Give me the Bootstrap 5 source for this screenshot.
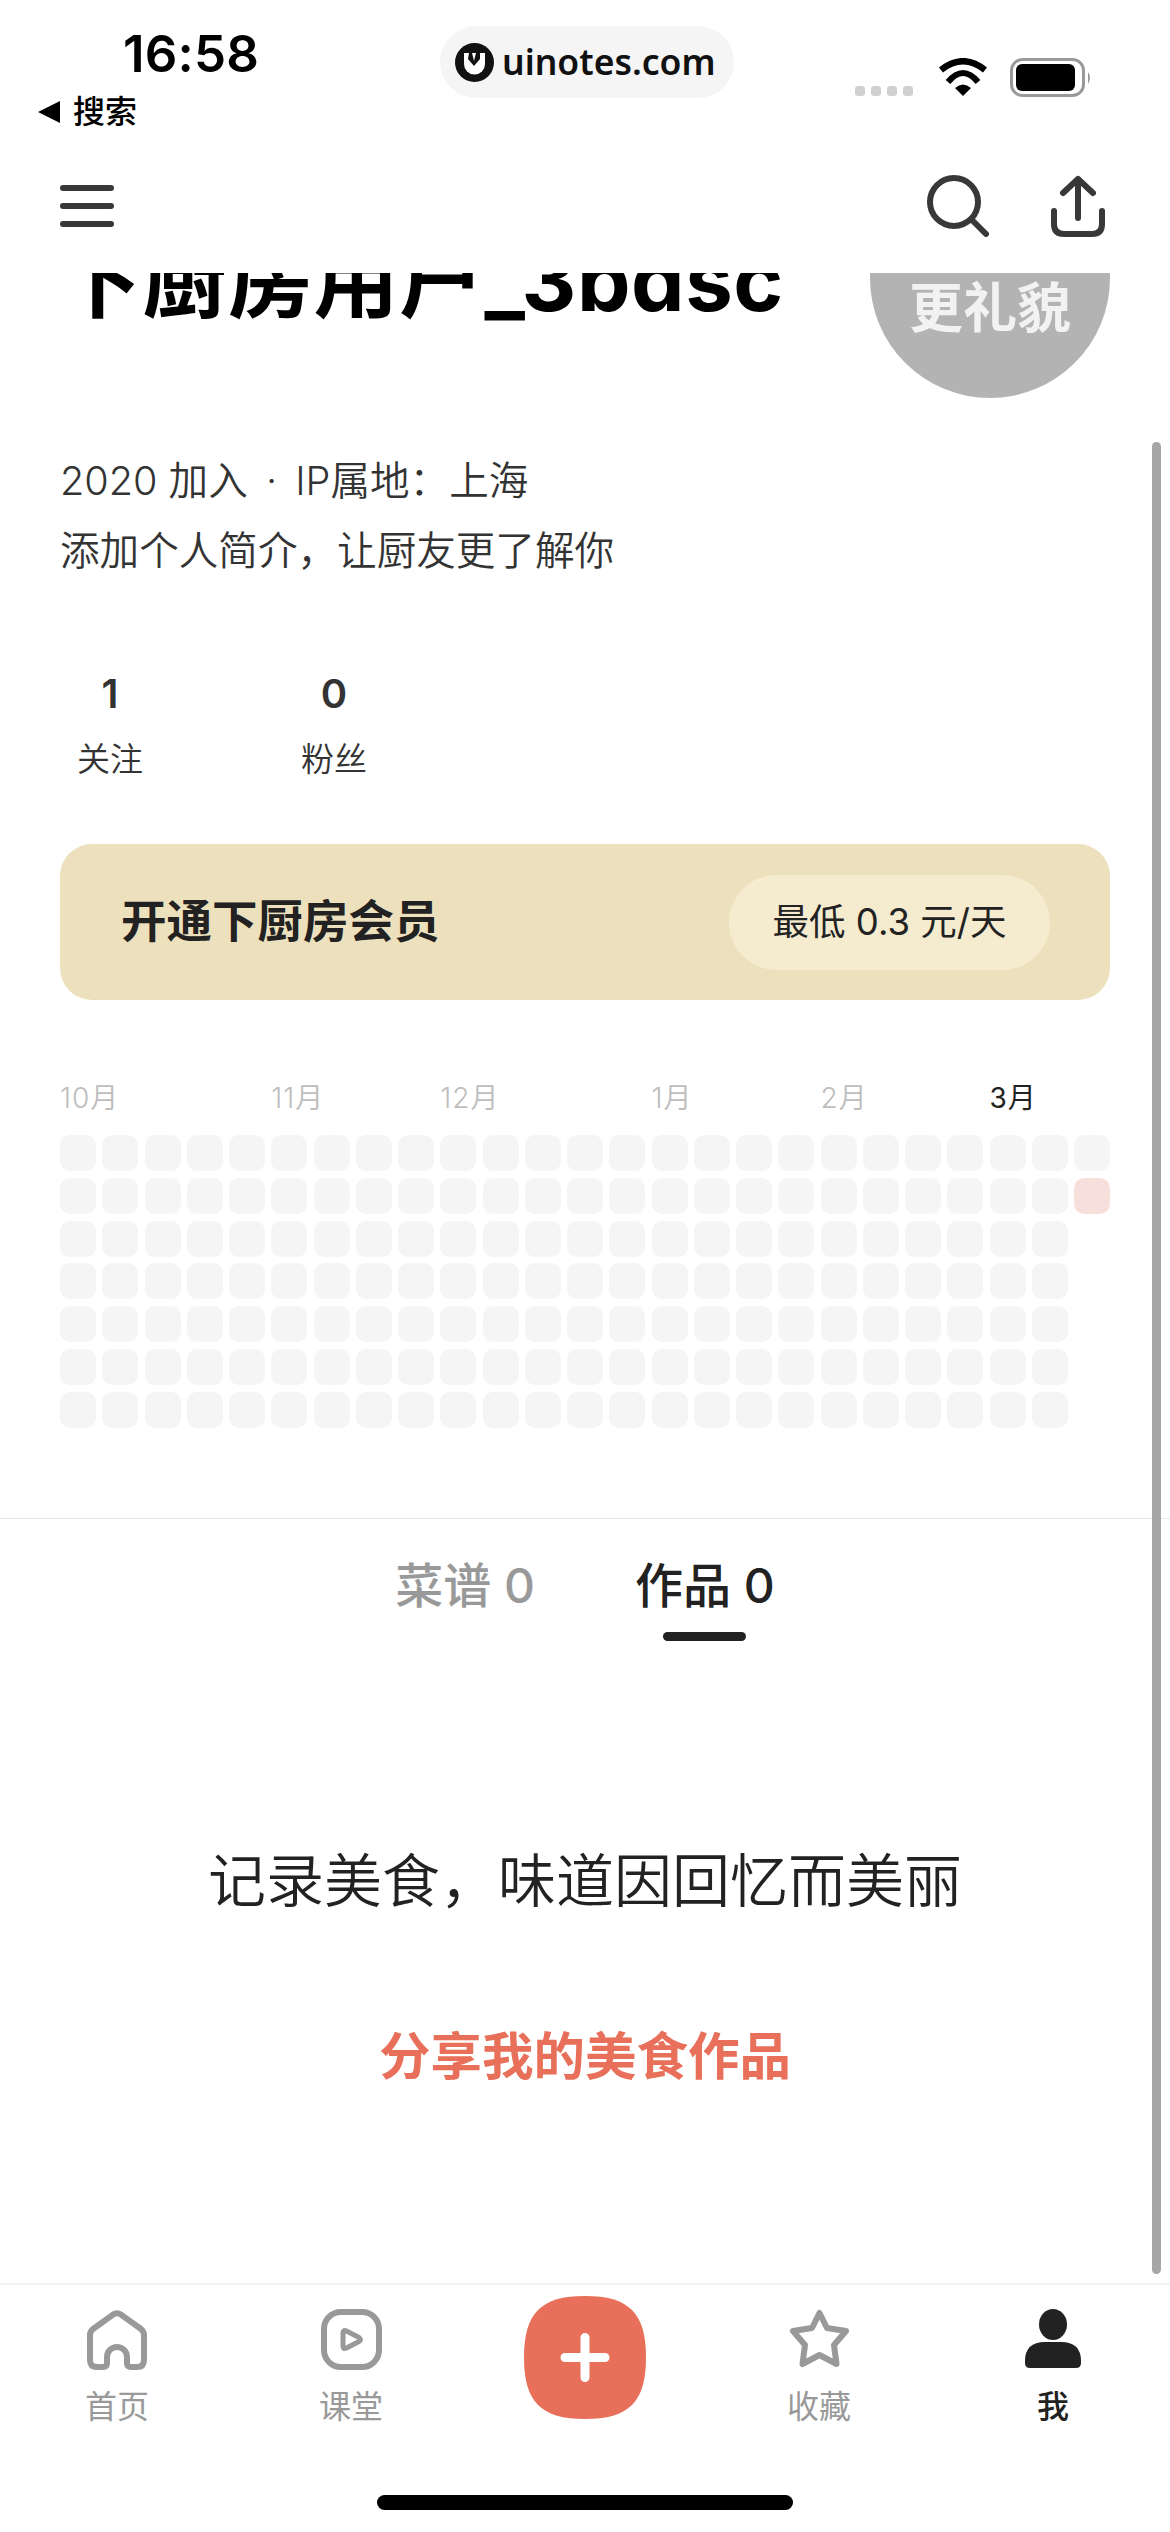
<!DOCTYPE html>
<html lang="zh-CN">
<head>
    <meta charset="UTF-8">
    <meta name="viewport" content="width=device-width, initial-scale=1.0">
    <title>下厨房 - 我</title>
    <link href="https://cdn.jsdelivr.net/npm/bootstrap@5.3.0/dist/css/bootstrap.min.css" rel="stylesheet">
    <style>
        html, body { width: 1170px; height: 2532px; overflow: hidden; }
        body {
            font-family: Inter, "Noto Sans CJK SC", sans-serif;
            color: #333;
            background: #fff;
            position: relative;
        }
        .page-wrap { height: 2532px; }

        /* status bar */
        .status-row { height: 162px; }
        .status-left { width: 440px; padding-left: 38px; }
        .clock { padding: 25px 0 0 85px; font-size: 51px; line-height: 58px; font-weight: 600; color: #000; letter-spacing: .2px; }
        .back-link { margin-top: 7px; font-size: 32px; line-height: 44px; color: #000; font-weight: 500; gap: 13px; }
        .back-tri { width: 0; height: 0; border-top: 11px solid transparent; border-bottom: 11px solid transparent; border-right: 22px solid #000; }
        .site-pill { width: 294px; height: 72px; margin-top: 26px; background: #f5f5f5; padding-left: 15px; gap: 8px; }
        .site-name { font-family: "Noto Sans", sans-serif; font-size: 35.5px; font-weight: 600; color: #111; line-height: 1; }
        .status-right { margin: 58px 0 0 121px; }
        .sig-dots { gap: 6px; margin: 28px 25px 0 0; }
        .sig-dots i { display: block; width: 10px; height: 10px; border-radius: 3px; background: #d0d0d0; }

        /* toolbar */
        .tool-row { height: 111px; padding: 0 65px 0 60px; }
        .burger { width: 54px; gap: 12px; margin-top: -24px; }
        .burger i { display: block; height: 6px; border-radius: 3px; background: #383838; }
        .tool-icons { margin-top: -24px; gap: 62px; }

        /* profile head, scrolled under the toolbar */
        .profile-head { height: 127px; padding: 0 60px 0 57px; }
        .user-name { font-size: 85px; line-height: 100px; font-weight: 700; color: #000; margin-top: -42px; white-space: nowrap; letter-spacing: .5px; }
        .avatar-disc { width: 240px; height: 240px; margin-top: -115px; background: #b3b3b3; color: #f2f2f2; font-size: 54px; font-weight: 700; padding-top: 60px; flex-shrink: 0; }

        .bio-block { padding: 46px 60px 0; font-size: 39.6px; line-height: 70px; color: #333; font-weight: 350; }
        .bio-dot { margin: 0 7px; }
        .stat-row { margin-top: 83px; padding-left: 60px; gap: 124px; }
        .stat-item { width: 100px; }
        .stat-num { font-size: 40px; line-height: 50px; font-weight: 600; color: #333; }
        .stat-label { margin-top: 15px; font-size: 33px; line-height: 50px; color: #333; font-weight: 350; }

        .vip-banner { height: 156px; margin: 60px 60px 0; padding: 0 60px 0 61px; background: #ede0bd; border-radius: 32px; }
        .vip-title { font-size: 45.5px; font-weight: 600; color: #222; }
        .vip-price { width: 321px; height: 95px; background: #f5ebcf; font-size: 36.5px; color: #222; }

        /* activity grid */
        .month-row, .day-grid { display: grid; grid-template-columns: repeat(25, 36px); column-gap: 6.25px; margin-left: 60px; width: 1050px; }
        .month-row { margin-top: 78px; font-size: 28px; line-height: 40px; color: #bdbdbd; font-weight: 350; white-space: nowrap; letter-spacing: 1px; }
        .month-row .month-now { color: #222; font-weight: 400; }
        .day-grid { margin-top: 17px; grid-template-rows: repeat(7, 36px); row-gap: 6.83px; grid-auto-flow: column; }
        .day-cell { background: #f5f5f5; border-radius: 10px; }
        .day-cell.day-on { background: #f7e0dc; }

        /* tabs */
        .tab-row { margin-top: 90px; padding-top: 32px; border-top: 1px solid #e8e8e8; gap: 100px; }
        .tab-item { font-size: 48px; line-height: 70px; font-weight: 500; color: #999; white-space: nowrap; }
        .tab-item.tab-on { color: #222; }
        .tab-mark { width: 83px; height: 9px; margin: 11px auto 0; background: #222; border-radius: 5px; }

        .empty-line { margin-top: 200px; font-size: 58px; line-height: 80px; color: #222; font-weight: 350; }
        .empty-link { margin-top: 100px; font-size: 51.5px; line-height: 70px; color: #e8705a; font-weight: 600; }

        /* bottom tab bar */
        .tabbar { height: 249px; border-top: 2px solid #f2f2f2; }
        .tabbar-cols { height: 210px; }
        .bar-item { width: 234px; padding-top: 24px; color: #999; font-size: 32px; }
        .bar-item svg { display: block; margin: 0 auto; height: 62px; }
        .bar-label { margin-top: 13px; line-height: 46px; font-weight: 400; }
        .bar-item.bar-on { color: #222; }
        .bar-item.bar-on .bar-label { font-weight: 500; }
        .plus-item { padding-top: 11px; }
        .plus-item svg { height: 123px; }
        .home-bar { width: 416px; height: 15px; margin: 0 auto; background: #000; border-radius: 8px; }
        .scroll-thumb { position: absolute; left: 1152px; top: 442px; width: 9px; height: 1832px; background: #a6a6a6; border-radius: 5px; }
    </style>
</head>
<body>
    <div class="page-wrap d-flex flex-column">
        <div class="status-row d-flex">
            <div class="status-left">
                <div class="clock">16:58</div>
                <div class="back-link d-flex align-items-center"><span class="back-tri"></span><span>搜索</span></div>
            </div>
            <div class="site-pill rounded-pill d-flex align-items-center">
                <svg width="39" height="39" viewBox="0 0 39 39">
                    <circle cx="19.5" cy="19.5" r="19.5" fill="#111"/>
                    <path d="M9 10h21v11a10.5 10.5 0 0 1-21 0z" fill="#fff"/>
                    <path d="M14 10h3l2 8 2-8h4v6l-6 7-6-7z" fill="#111"/>
                </svg>
                <span class="site-name">uinotes.com</span>
            </div>
            <div class="status-right d-flex align-items-start">
                <div class="sig-dots d-flex"><i></i><i></i><i></i><i></i></div>
                <svg width="50" height="38" viewBox="0 0 50 38" class="me-4">
                    <path d="M3 12Q25 -5.5 47 12" fill="none" stroke="#000" stroke-width="6.5"/>
                    <path d="M10 24Q25 6 40 24" fill="none" stroke="#000" stroke-width="6"/>
                    <path d="M17 30Q25 23 33 30L25 38Z" fill="#000"/>
                </svg>
                <svg width="83" height="40" viewBox="0 0 83 40" style="margin-left:-2px">
                    <rect x="1.5" y="1.5" width="72" height="36" rx="11" fill="none" stroke="#999" stroke-width="3"/>
                    <rect x="6" y="6" width="59" height="27" rx="6" fill="#000"/>
                    <path d="M78 14Q82 19.500 78 26Z" fill="#999"/>
                </svg>
            </div>
        </div>

        <div class="tool-row d-flex justify-content-between align-items-center">
            <div class="burger d-flex flex-column"><i></i><i></i><i></i></div>
            <div class="tool-icons d-flex align-items-center">
                <svg width="62" height="62" viewBox="0 0 62 62" fill="none" stroke="#383838" stroke-width="6" stroke-linecap="round">
                    <circle cx="27" cy="27" r="24"/>
                    <path d="M45 45L59 59"/>
                </svg>
                <svg width="54" height="62" viewBox="0 0 54 62" fill="none" stroke="#383838" stroke-width="6" stroke-linecap="round" stroke-linejoin="round">
                    <path d="M27 43V4M12 18L27 4L42 18"/>
                    <path d="M3 36V49Q3 59 13 59H41Q51 59 51 49V36"/>
                </svg>
            </div>
        </div>

        <div class="profile-head d-flex justify-content-between overflow-hidden">
            <div class="user-name">下厨房用户_3bdsc</div>
            <div class="avatar-disc rounded-circle d-flex justify-content-center align-items-center">更礼貌</div>
        </div>

        <div class="bio-block">
            <div>2020 加入<span class="bio-dot"> · </span>IP属地：上海</div>
            <div>添加个人简介，让厨友更了解你</div>
        </div>

        <div class="stat-row d-flex text-center">
            <div class="stat-item"><div class="stat-num">1</div><div class="stat-label">关注</div></div>
            <div class="stat-item"><div class="stat-num">0</div><div class="stat-label">粉丝</div></div>
        </div>

        <div class="vip-banner d-flex justify-content-between align-items-center">
            <div class="vip-title">开通下厨房会员</div>
            <div class="vip-price rounded-pill d-flex justify-content-center align-items-center">最低 0.3 元/天</div>
        </div>

        <div class="month-row">
            <div style="grid-column: span 5">10月</div>
            <div style="grid-column: span 4">11月</div>
            <div style="grid-column: span 5">12月</div>
            <div style="grid-column: span 4">1月</div>
            <div style="grid-column: span 4">2月</div>
            <div class="month-now" style="grid-column: span 3">3月</div>
        </div>
        <div class="day-grid" id="day-grid"></div>

        <div class="tab-row d-flex justify-content-center">
            <div class="tab-item">菜谱 0</div>
            <div class="tab-item tab-on">作品 0<div class="tab-mark"></div></div>
        </div>

        <div class="flex-grow-1 text-center">
            <div class="empty-line">记录美食，味道因回忆而美丽</div>
            <div class="empty-link">分享我的美食作品</div>
        </div>

        <div class="tabbar">
            <div class="tabbar-cols d-flex text-center">
                <div class="bar-item">
                    <svg width="60" height="62" viewBox="0 0 60 62" fill="none" stroke="#999" stroke-width="6" stroke-linejoin="round">
                        <path d="M6 20L26 5.600Q30 3 34 5.600L54 20Q57 22.500 57 26V51Q57 58 50 58H44Q40 58 40 54V48A10 10 0 0 0 20 48V54Q20 58 16 58H10Q3 58 3 51V26Q3 22.500 6 20Z"/>
                    </svg>
                    <div class="bar-label">首页</div>
                </div>
                <div class="bar-item">
                    <svg width="61" height="62" viewBox="0 0 61 62" fill="none" stroke="#999" stroke-linejoin="round">
                        <rect x="3" y="3" width="55" height="55" rx="17" stroke-width="6"/>
                        <path d="M22 24Q22 20.500 25.500 22L38 28.500Q41 30.500 38 32.500L25.500 39Q22 40.500 22 37Z" stroke-width="5"/>
                    </svg>
                    <div class="bar-label">课堂</div>
                </div>
                <div class="bar-item plus-item">
                    <svg width="122" height="123" viewBox="0 0 122 123">
                        <path d="M61 0C105 0 122 17 122 61.500C122 106 105 123 61 123C17 123 0 106 0 61.500C0 17 17 0 61 0Z" fill="#e8705a"/>
                        <path d="M61 41.500V81.500M41 61.500H81" fill="none" stroke="#fff" stroke-width="9" stroke-linecap="round"/>
                    </svg>
                </div>
                <div class="bar-item">
                    <svg width="61" height="62" viewBox="0 0 61 62" fill="none" stroke="#999" stroke-width="6" stroke-linejoin="round">
                        <path d="M30.500 4L38 19L57 22L45 36L47.500 55L30.500 46L13.500 55L16 36L4 22L23 19Z"/>
                    </svg>
                    <div class="bar-label">收藏</div>
                </div>
                <div class="bar-item bar-on">
                    <svg width="56" height="62" viewBox="0 0 56 62" fill="#222">
                        <ellipse cx="28" cy="15.500" rx="14" ry="15.500"/>
                        <path d="M20 33H36Q56 33 56 52V54Q56 59 51 59H5Q0 59 0 54V52Q0 33 20 33Z"/>
                    </svg>
                    <div class="bar-label">我</div>
                </div>
            </div>
            <div class="home-bar"></div>
        </div>
    </div>
    <div class="scroll-thumb"></div>

    <script src="https://cdn.jsdelivr.net/npm/bootstrap@5.3.0/dist/js/bootstrap.bundle.min.js"></script>
    <script>
        // 24 full weeks plus the two days of the current one
        const grid = document.getElementById('day-grid');
        const total = 24 * 7 + 2;
        for (let i = 0; i < total; i++) {
            const cell = document.createElement('div');
            cell.className = 'day-cell' + (i === total - 1 ? ' day-on' : '');
            grid.appendChild(cell);
        }
    </script>
</body>
</html>
